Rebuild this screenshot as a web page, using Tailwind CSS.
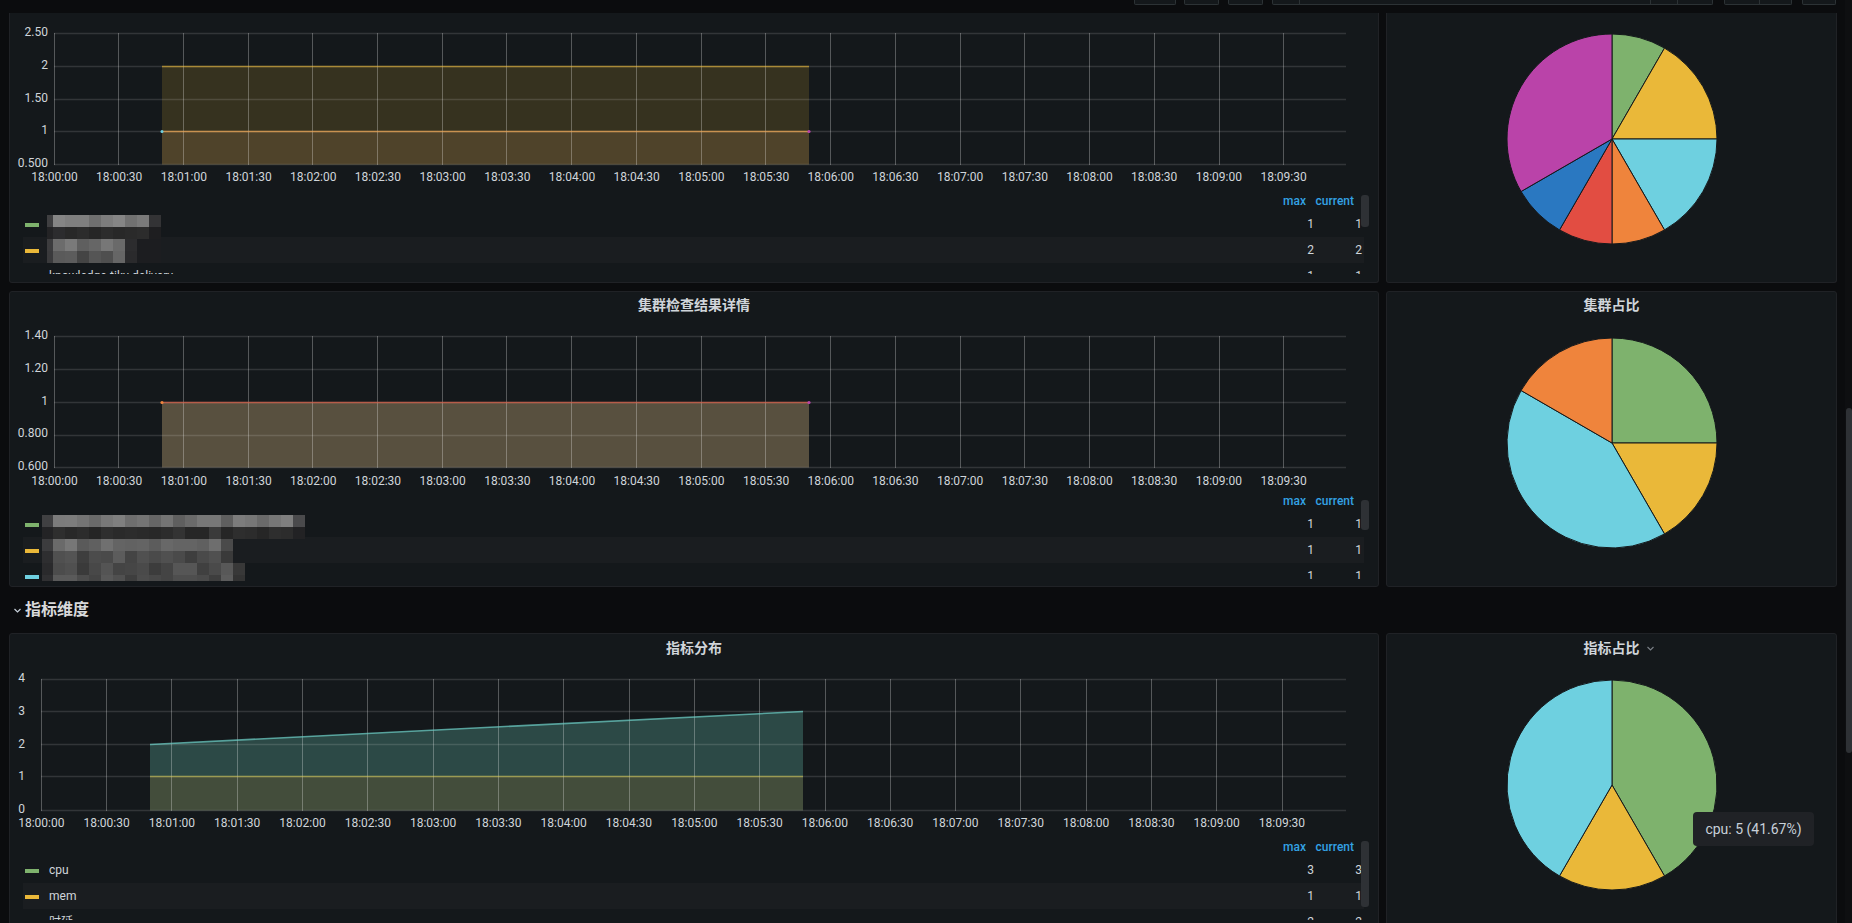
<!DOCTYPE html>
<html lang="zh">
<head>
<meta charset="utf-8">
<title>Dashboard</title>
<script src="https://cdn.jsdelivr.net/npm/@tailwindcss/browser@4"></script>
</head>
<body class="relative h-[923px] w-[1852px] overflow-hidden bg-[#0b0c0e] font-['Roboto','Noto_Sans_CJK_SC',sans-serif] text-xs text-[#d0d5da]">

<!-- toolbar -->
<div class="flex h-[13px] items-start justify-end pr-[16px]">
  <div class="h-[5px] w-[42px] rounded-b-[2px] border border-t-0 border-[#2c3235] bg-[#14181b]"></div>
  <div class="ml-[8px] h-[5px] w-[35px] rounded-b-[2px] border border-t-0 border-[#2c3235] bg-[#14181b]"></div>
  <div class="ml-[9px] h-[5px] w-[35px] rounded-b-[2px] border border-t-0 border-[#2c3235] bg-[#14181b]"></div>
  <div class="ml-[9px] flex h-[5px] w-[441px] rounded-b-[2px] border border-t-0 border-[#2c3235] bg-[#14181b]">
    <div class="w-[27px] border-r border-[#2c3235]"></div>
    <div class="w-[351px] border-r border-[#2c3235]"></div>
    <div class="w-[27px] border-r border-[#2c3235]"></div>
  </div>
  <div class="ml-[11px] flex h-[5px] w-[68px] rounded-b-[2px] border border-t-0 border-[#2c3235] bg-[#14181b]">
    <div class="w-[35px] border-r border-[#2c3235]"></div>
  </div>
  <div class="ml-[10px] h-[5px] w-[34px] rounded-b-[2px] border border-t-0 border-[#2c3235] bg-[#14181b]"></div>
</div>

<!-- dashboard -->
<div class="ml-[9px] w-[1828px]">
  <!-- row 1 -->
  <div class="flex gap-[7px]">
    <section class="relative h-[270px] w-[1370px] rounded-b-[3px] border-x border-b border-[#202226] bg-[#14181b] pt-[20px]">
      <div class="flex items-start">
        <div class="-mb-[6px] -mt-[9px] flex h-[147px] w-[44px] flex-col justify-between pr-[6px] text-right leading-4">
          <span>2.50</span><span>2</span><span>1.50</span><span>1</span><span>0.500</span>
        </div>
        <svg width="1292" height="132" class="block overflow-visible">
          <rect x="108" y="33.5" width="647" height="98" fill="#eab839" fill-opacity="0.16"/>
          <rect x="108" y="98.5" width="647" height="33" fill="#f6ba73" fill-opacity="0.13"/>
          <g stroke="#ffffff">
            <path stroke-opacity="0.28" d="M0.5 0V132M64.5 0V132M129.5 0V132M194.5 0V132M258.5 0V132M323.5 0V132M388.5 0V132M452.5 0V132M517.5 0V132M582.5 0V132M647.5 0V132M711.5 0V132M776.5 0V132M841.5 0V132M906.5 0V132M970.5 0V132M1035.5 0V132M1100.5 0V132M1165.5 0V132M1229.5 0V132"/>
            <path stroke-opacity="0.13" stroke-width="1.6" d="M0 0.5H1292M0 33.5H1292M0 66.5H1292M0 98.5H1292M0 131.5H1292"/>
          </g>
          <path d="M108 33.5H755" stroke="#eab839" stroke-opacity="0.62" stroke-width="1.4"/>
          <path d="M108 98.5H755" stroke="#e8a455" stroke-opacity="0.78" stroke-width="1.6"/>
          <circle cx="108" cy="98.5" r="1.5" fill="#6ed0e0"/>
          <circle cx="755" cy="98.5" r="1.6" fill="#ba43a9"/>
        </svg>
      </div>
      <div class="ml-[12.15px] mt-[4px] flex leading-4">
        <span class="w-[64.7px] shrink-0 text-center">18:00:00</span><span class="w-[64.7px] shrink-0 text-center">18:00:30</span><span class="w-[64.7px] shrink-0 text-center">18:01:00</span><span class="w-[64.7px] shrink-0 text-center">18:01:30</span><span class="w-[64.7px] shrink-0 text-center">18:02:00</span><span class="w-[64.7px] shrink-0 text-center">18:02:30</span><span class="w-[64.7px] shrink-0 text-center">18:03:00</span><span class="w-[64.7px] shrink-0 text-center">18:03:30</span><span class="w-[64.7px] shrink-0 text-center">18:04:00</span><span class="w-[64.7px] shrink-0 text-center">18:04:30</span><span class="w-[64.7px] shrink-0 text-center">18:05:00</span><span class="w-[64.7px] shrink-0 text-center">18:05:30</span><span class="w-[64.7px] shrink-0 text-center">18:06:00</span><span class="w-[64.7px] shrink-0 text-center">18:06:30</span><span class="w-[64.7px] shrink-0 text-center">18:07:00</span><span class="w-[64.7px] shrink-0 text-center">18:07:30</span><span class="w-[64.7px] shrink-0 text-center">18:08:00</span><span class="w-[64.7px] shrink-0 text-center">18:08:30</span><span class="w-[64.7px] shrink-0 text-center">18:09:00</span><span class="w-[64.7px] shrink-0 text-center">18:09:30</span>
      </div>
      <div class="relative ml-[13px] mt-[5px] h-[84px] w-[1341px] overflow-hidden">
        <div class="grid h-[21px] grid-cols-[1fr_48px_48px] items-center pr-[2px] text-right font-medium text-[#33a2e5]"><span></span><span class="pr-2">max</span><span class="pr-2">current</span></div>
        <div class="grid h-[26px] grid-cols-[1fr_48px_48px] items-center pl-[2px] pr-[2px] text-right"><span class="flex items-center gap-[10px] text-left"><i class="mt-[2px] h-[4px] w-[14px] bg-[#7eb26d]"></i><span>&nbsp;</span></span><span>1</span><span>1</span></div>
        <div class="grid h-[26px] grid-cols-[1fr_48px_48px] items-center bg-[#1a1d20] pl-[2px] pr-[2px] text-right"><span class="flex items-center gap-[10px] text-left"><i class="mt-[2px] h-[4px] w-[14px] bg-[#eab839]"></i><span>&nbsp;</span></span><span>2</span><span>2</span></div>
        <div class="grid h-[26px] grid-cols-[1fr_48px_48px] items-center pl-[2px] pr-[2px] text-right"><span class="flex items-center gap-[10px] text-left"><i class="mt-[2px] h-[4px] w-[14px] bg-[#6ed0e0]"></i><span>knowledge-tikv-delivery</span></span><span>1</span><span>1</span></div>
      </div>
      <div class="absolute left-[1351px] top-[182px] h-[32px] w-[8px] rounded-[3px] bg-[#2e3135]"></div>
      <svg width="114" height="48" class="absolute left-[37px] top-[202px]">
        <g shape-rendering="crispEdges">
          <rect x="0" y="0" width="6" height="12" fill="#3f3f41"/><rect x="6" y="0" width="12" height="12" fill="#858585"/><rect x="18" y="0" width="12" height="12" fill="#7f7f7f"/><rect x="30" y="0" width="12" height="12" fill="#7f7f7f"/><rect x="42" y="0" width="12" height="12" fill="#6f6f6f"/><rect x="54" y="0" width="12" height="12" fill="#7d7d7d"/><rect x="66" y="0" width="12" height="12" fill="#858585"/><rect x="78" y="0" width="12" height="12" fill="#717171"/><rect x="90" y="0" width="12" height="12" fill="#7a7a7a"/><rect x="102" y="0" width="12" height="12" fill="#333335"/>
          <rect x="0" y="12" width="6" height="12" fill="#232325"/><rect x="6" y="12" width="12" height="12" fill="#2c2c2e"/><rect x="18" y="12" width="12" height="12" fill="#282828"/><rect x="30" y="12" width="12" height="12" fill="#2c2c2c"/><rect x="42" y="12" width="12" height="12" fill="#262626"/><rect x="54" y="12" width="12" height="12" fill="#2c2c2c"/><rect x="66" y="12" width="12" height="12" fill="#282828"/><rect x="78" y="12" width="12" height="12" fill="#2a2a2a"/><rect x="90" y="12" width="12" height="12" fill="#2c2c2c"/><rect x="102" y="12" width="12" height="12" fill="#1e1e20"/>
          <rect x="0" y="24" width="6" height="12" fill="#3c3c3e"/><rect x="6" y="24" width="12" height="12" fill="#6c6c6c"/><rect x="18" y="24" width="12" height="12" fill="#7a7a7a"/><rect x="30" y="24" width="12" height="12" fill="#5f5f5f"/><rect x="42" y="24" width="12" height="12" fill="#666666"/><rect x="54" y="24" width="12" height="12" fill="#777777"/><rect x="66" y="24" width="12" height="12" fill="#6a6a6a"/><rect x="78" y="24" width="12" height="12" fill="#2c2c2e"/><rect x="90" y="24" width="24" height="12" fill="#1c1d20"/>
          <rect x="0" y="36" width="6" height="12" fill="#3a3a3c"/><rect x="6" y="36" width="12" height="12" fill="#5a5a5a"/><rect x="18" y="36" width="12" height="12" fill="#5c5c5c"/><rect x="30" y="36" width="12" height="12" fill="#444444"/><rect x="42" y="36" width="12" height="12" fill="#555555"/><rect x="54" y="36" width="12" height="12" fill="#4f4f4f"/><rect x="66" y="36" width="12" height="12" fill="#666666"/><rect x="78" y="36" width="12" height="12" fill="#2a2a2c"/><rect x="90" y="36" width="24" height="12" fill="#1c1d20"/>
        </g>
      </svg>
    </section>
    <section class="flex h-[270px] w-[451px] justify-center rounded-b-[3px] border-x border-b border-[#202226] bg-[#14181b] pt-[20px]">
      <svg width="212" height="212" viewBox="-106 -106 212 212" class="block" stroke="#14181b" stroke-width="1">
        <path d="M0 0V-105A105 105 0 0 1 52.5 -90.93Z" fill="#7eb26d"/>
        <path d="M0 0L52.5 -90.93A105 105 0 0 1 105 0Z" fill="#eab839"/>
        <path d="M0 0H105A105 105 0 0 1 52.5 90.93Z" fill="#6ed0e0"/>
        <path d="M0 0L52.5 90.93A105 105 0 0 1 0 105Z" fill="#ef843c"/>
        <path d="M0 0V105A105 105 0 0 1 -52.5 90.93Z" fill="#e24d42"/>
        <path d="M0 0L-52.5 90.93A105 105 0 0 1 -90.93 52.5Z" fill="#2a78c1"/>
        <path d="M0 0L-90.93 52.5A105 105 0 0 1 0 -105Z" fill="#ba43a9"/>
      </svg>
    </section>
  </div>

  <!-- row 2 -->
  <div class="mt-[8px] flex gap-[7px]">
    <section class="relative h-[296px] w-[1370px] rounded-[3px] border border-[#202226] bg-[#14181b]">
      <h3 class="h-[28px] text-center text-[14px] font-bold leading-[27px]">集群检查结果详情</h3>
      <div class="mt-[16px] flex items-start">
        <div class="-mb-[6px] -mt-[9px] flex h-[147px] w-[44px] flex-col justify-between pr-[6px] text-right leading-4">
          <span>1.40</span><span>1.20</span><span>1</span><span>0.800</span><span>0.600</span>
        </div>
        <svg width="1292" height="132" class="block overflow-visible">
          <rect x="108" y="66.5" width="647" height="65" fill="#d6b983" fill-opacity="0.35"/>
          <g stroke="#ffffff">
            <path stroke-opacity="0.28" d="M0.5 0V132M64.5 0V132M129.5 0V132M194.5 0V132M258.5 0V132M323.5 0V132M388.5 0V132M452.5 0V132M517.5 0V132M582.5 0V132M647.5 0V132M711.5 0V132M776.5 0V132M841.5 0V132M906.5 0V132M970.5 0V132M1035.5 0V132M1100.5 0V132M1165.5 0V132M1229.5 0V132"/>
            <path stroke-opacity="0.13" stroke-width="1.6" d="M0 0.5H1292M0 33.5H1292M0 66.5H1292M0 99.5H1292M0 131.5H1292"/>
          </g>
          <path d="M108 66.5H755" stroke="#d0604a" stroke-opacity="0.8" stroke-width="1.6"/>
          <circle cx="108" cy="66.5" r="1.6" fill="#ef843c"/>
          <circle cx="755" cy="66.5" r="1.6" fill="#ba43a9"/>
        </svg>
      </div>
      <div class="ml-[12.15px] mt-[5px] flex leading-4">
        <span class="w-[64.7px] shrink-0 text-center">18:00:00</span><span class="w-[64.7px] shrink-0 text-center">18:00:30</span><span class="w-[64.7px] shrink-0 text-center">18:01:00</span><span class="w-[64.7px] shrink-0 text-center">18:01:30</span><span class="w-[64.7px] shrink-0 text-center">18:02:00</span><span class="w-[64.7px] shrink-0 text-center">18:02:30</span><span class="w-[64.7px] shrink-0 text-center">18:03:00</span><span class="w-[64.7px] shrink-0 text-center">18:03:30</span><span class="w-[64.7px] shrink-0 text-center">18:04:00</span><span class="w-[64.7px] shrink-0 text-center">18:04:30</span><span class="w-[64.7px] shrink-0 text-center">18:05:00</span><span class="w-[64.7px] shrink-0 text-center">18:05:30</span><span class="w-[64.7px] shrink-0 text-center">18:06:00</span><span class="w-[64.7px] shrink-0 text-center">18:06:30</span><span class="w-[64.7px] shrink-0 text-center">18:07:00</span><span class="w-[64.7px] shrink-0 text-center">18:07:30</span><span class="w-[64.7px] shrink-0 text-center">18:08:00</span><span class="w-[64.7px] shrink-0 text-center">18:08:30</span><span class="w-[64.7px] shrink-0 text-center">18:09:00</span><span class="w-[64.7px] shrink-0 text-center">18:09:30</span>
      </div>
      <div class="relative ml-[13px] mt-[1px] h-[89px] w-[1341px] overflow-hidden">
        <div class="grid h-[21px] grid-cols-[1fr_48px_48px] items-center pr-[2px] text-right font-medium text-[#33a2e5]"><span></span><span class="pr-2">max</span><span class="pr-2">current</span></div>
        <div class="grid h-[26px] grid-cols-[1fr_48px_48px] items-center pl-[2px] pr-[2px] text-right"><span class="flex items-center text-left"><i class="mt-[2px] h-[4px] w-[14px] bg-[#7eb26d]"></i></span><span>1</span><span>1</span></div>
        <div class="grid h-[26px] grid-cols-[1fr_48px_48px] items-center bg-[#1a1d20] pl-[2px] pr-[2px] text-right"><span class="flex items-center text-left"><i class="mt-[2px] h-[4px] w-[14px] bg-[#eab839]"></i></span><span>1</span><span>1</span></div>
        <div class="grid h-[26px] grid-cols-[1fr_48px_48px] items-center pl-[2px] pr-[2px] text-right"><span class="flex items-center text-left"><i class="mt-[2px] h-[4px] w-[14px] bg-[#6ed0e0]"></i></span><span>1</span><span>1</span></div>
      </div>
      <div class="absolute left-[1351px] top-[208px] h-[30px] w-[8px] rounded-[3px] bg-[#2e3135]"></div>
      <svg width="263" height="66" class="absolute left-[32px] top-[223px]">
        <g shape-rendering="crispEdges">
          <rect x="0" y="0" width="11" height="12" fill="#404042"/><rect x="11" y="0" width="12" height="12" fill="#7b7b7b"/><rect x="23" y="0" width="12" height="12" fill="#7c7c7c"/><rect x="35" y="0" width="12" height="12" fill="#747474"/><rect x="47" y="0" width="12" height="12" fill="#6a6a6a"/><rect x="59" y="0" width="12" height="12" fill="#787878"/><rect x="71" y="0" width="12" height="12" fill="#7f7f7f"/><rect x="83" y="0" width="12" height="12" fill="#6e6e6e"/><rect x="95" y="0" width="12" height="12" fill="#747474"/><rect x="107" y="0" width="12" height="12" fill="#666666"/><rect x="119" y="0" width="12" height="12" fill="#747474"/><rect x="131" y="0" width="12" height="12" fill="#5f5f5f"/><rect x="143" y="0" width="12" height="12" fill="#6a6a6a"/><rect x="155" y="0" width="12" height="12" fill="#777777"/><rect x="167" y="0" width="12" height="12" fill="#777777"/><rect x="179" y="0" width="12" height="12" fill="#5f5f5f"/><rect x="191" y="0" width="12" height="12" fill="#7c7c7c"/><rect x="203" y="0" width="12" height="12" fill="#777777"/><rect x="215" y="0" width="12" height="12" fill="#6a6a6a"/><rect x="227" y="0" width="12" height="12" fill="#777777"/><rect x="239" y="0" width="12" height="12" fill="#7f7f7f"/><rect x="251" y="0" width="12" height="12" fill="#4a4a4c"/>
          <rect x="0" y="12" width="11" height="12" fill="#232325"/><rect x="11" y="12" width="12" height="12" fill="#2e2e2e"/><rect x="23" y="12" width="12" height="12" fill="#282828"/><rect x="35" y="12" width="12" height="12" fill="#2c2c2c"/><rect x="47" y="12" width="12" height="12" fill="#252525"/><rect x="59" y="12" width="12" height="12" fill="#2e2e2e"/><rect x="71" y="12" width="12" height="12" fill="#2a2a2a"/><rect x="83" y="12" width="12" height="12" fill="#2c2c2c"/><rect x="95" y="12" width="12" height="12" fill="#2a2a2a"/><rect x="107" y="12" width="12" height="12" fill="#282828"/><rect x="119" y="12" width="12" height="12" fill="#2c2c2c"/><rect x="131" y="12" width="12" height="12" fill="#333333"/><rect x="143" y="12" width="12" height="12" fill="#262626"/><rect x="155" y="12" width="12" height="12" fill="#262626"/><rect x="167" y="12" width="12" height="12" fill="#3a3a3a"/><rect x="179" y="12" width="12" height="12" fill="#262626"/><rect x="191" y="12" width="12" height="12" fill="#2e2e2e"/><rect x="203" y="12" width="12" height="12" fill="#2c2c2c"/><rect x="215" y="12" width="12" height="12" fill="#262626"/><rect x="227" y="12" width="12" height="12" fill="#2e2e2e"/><rect x="239" y="12" width="12" height="12" fill="#2c2c2c"/><rect x="251" y="12" width="12" height="12" fill="#222224"/>
          <rect x="0" y="24" width="11" height="12" fill="#3c3c3e"/><rect x="11" y="24" width="12" height="12" fill="#6a6a6a"/><rect x="23" y="24" width="12" height="12" fill="#777777"/><rect x="35" y="24" width="12" height="12" fill="#5a5a5a"/><rect x="47" y="24" width="12" height="12" fill="#606060"/><rect x="59" y="24" width="12" height="12" fill="#707070"/><rect x="71" y="24" width="12" height="12" fill="#646464"/><rect x="83" y="24" width="12" height="12" fill="#626262"/><rect x="95" y="24" width="12" height="12" fill="#646464"/><rect x="107" y="24" width="12" height="12" fill="#5c5c5c"/><rect x="119" y="24" width="12" height="12" fill="#686868"/><rect x="131" y="24" width="12" height="12" fill="#646464"/><rect x="143" y="24" width="12" height="12" fill="#646464"/><rect x="155" y="24" width="12" height="12" fill="#606060"/><rect x="167" y="24" width="12" height="12" fill="#6e6e6e"/><rect x="179" y="24" width="12" height="12" fill="#4a4a4a"/>
          <rect x="0" y="36" width="11" height="12" fill="#2e2e30"/><rect x="11" y="36" width="12" height="12" fill="#505050"/><rect x="23" y="36" width="12" height="12" fill="#545454"/><rect x="35" y="36" width="12" height="12" fill="#3e3e3e"/><rect x="47" y="36" width="12" height="12" fill="#4c4c4c"/><rect x="59" y="36" width="12" height="12" fill="#4a4a4a"/><rect x="71" y="36" width="12" height="12" fill="#5c5c5c"/><rect x="83" y="36" width="12" height="12" fill="#444444"/><rect x="95" y="36" width="12" height="12" fill="#505050"/><rect x="107" y="36" width="12" height="12" fill="#4a4a4a"/><rect x="119" y="36" width="12" height="12" fill="#505050"/><rect x="131" y="36" width="12" height="12" fill="#4a4a4a"/><rect x="143" y="36" width="12" height="12" fill="#3e3e3e"/><rect x="155" y="36" width="12" height="12" fill="#4a4a4a"/><rect x="167" y="36" width="12" height="12" fill="#505050"/><rect x="179" y="36" width="12" height="12" fill="#3a3a3a"/>
          <rect x="0" y="48" width="11" height="12" fill="#2a2a2c"/><rect x="11" y="48" width="12" height="12" fill="#4c4c4c"/><rect x="23" y="48" width="12" height="12" fill="#505050"/><rect x="35" y="48" width="12" height="12" fill="#3a3a3a"/><rect x="47" y="48" width="12" height="12" fill="#484848"/><rect x="59" y="48" width="12" height="12" fill="#545454"/><rect x="71" y="48" width="12" height="12" fill="#444444"/><rect x="83" y="48" width="12" height="12" fill="#464646"/><rect x="95" y="48" width="12" height="12" fill="#4a4a4a"/><rect x="107" y="48" width="12" height="12" fill="#3c3c3c"/><rect x="119" y="48" width="12" height="12" fill="#444444"/><rect x="131" y="48" width="12" height="12" fill="#565656"/><rect x="143" y="48" width="12" height="12" fill="#565656"/><rect x="155" y="48" width="12" height="12" fill="#404040"/><rect x="167" y="48" width="12" height="12" fill="#4a4a4a"/><rect x="179" y="48" width="12" height="12" fill="#585858"/><rect x="191" y="48" width="12" height="12" fill="#383838"/>
          <rect x="0" y="60" width="11" height="6" fill="#303032"/><rect x="11" y="60" width="12" height="6" fill="#5a5a5a"/><rect x="23" y="60" width="12" height="6" fill="#5a5a5a"/><rect x="35" y="60" width="12" height="6" fill="#4c4c4c"/><rect x="47" y="60" width="12" height="6" fill="#444444"/><rect x="59" y="60" width="12" height="6" fill="#585858"/><rect x="71" y="60" width="12" height="6" fill="#505050"/><rect x="83" y="60" width="12" height="6" fill="#3e3e3e"/><rect x="95" y="60" width="12" height="6" fill="#4c4c4c"/><rect x="107" y="60" width="12" height="6" fill="#484848"/><rect x="119" y="60" width="12" height="6" fill="#444444"/><rect x="131" y="60" width="12" height="6" fill="#4e4e4e"/><rect x="143" y="60" width="12" height="6" fill="#4e4e4e"/><rect x="155" y="60" width="12" height="6" fill="#4a4a4a"/><rect x="167" y="60" width="12" height="6" fill="#3e3e3e"/><rect x="179" y="60" width="12" height="6" fill="#5c5c5c"/><rect x="191" y="60" width="12" height="6" fill="#333333"/>
        </g>
      </svg>
    </section>
    <section class="h-[296px] w-[451px] rounded-[3px] border border-[#202226] bg-[#14181b]">
      <h3 class="h-[28px] text-center text-[14px] font-bold leading-[27px]">集群占比</h3>
      <div class="mt-[17px] flex justify-center">
        <svg width="212" height="212" viewBox="-106 -106 212 212" class="block" stroke="#14181b" stroke-width="1">
          <path d="M0 0V-105A105 105 0 0 1 105 0Z" fill="#7eb26d"/>
          <path d="M0 0H105A105 105 0 0 1 52.5 90.93Z" fill="#eab839"/>
          <path d="M0 0L52.5 90.93A105 105 0 0 1 -90.93 -52.5Z" fill="#6ed0e0"/>
          <path d="M0 0L-90.93 -52.5A105 105 0 0 1 0 -105Z" fill="#ef843c"/>
        </svg>
      </div>
    </section>
  </div>

  <!-- section header -->
  <div class="flex h-[46px] items-center gap-[3px] pl-[4px] text-[#d8d9da]">
    <svg width="9" height="9" viewBox="0 0 9 9" class="shrink-0" fill="none" stroke="#c7d0d9" stroke-width="1.2"><path d="M1.5 3L4.5 6L7.5 3"/></svg>
    <h2 class="text-base font-bold">指标维度</h2>
  </div>

  <!-- row 3 -->
  <div class="flex gap-[7px]">
    <section class="relative h-[320px] w-[1370px] rounded-[3px] border border-[#202226] bg-[#14181b]">
      <h3 class="h-[28px] text-center text-[14px] font-bold leading-[28px]">指标分布</h3>
      <div class="mt-[17px] flex items-start">
        <div class="-mb-[6px] -mt-[9px] flex h-[147px] w-[31px] flex-col justify-between pr-[16px] text-right leading-4">
          <span>4</span><span>3</span><span>2</span><span>1</span><span>0</span>
        </div>
        <svg width="1305" height="132" class="block overflow-visible">
          <path d="M109 65.5L762 32.5V131.5H109Z" fill="#67bdac" fill-opacity="0.3"/>
          <rect x="109" y="97.5" width="653" height="34" fill="#c66300" fill-opacity="0.15"/>
          <g stroke="#ffffff">
            <path stroke-opacity="0.28" d="M0.5 0V132M65.5 0V132M130.5 0V132M196.5 0V132M261.5 0V132M326.5 0V132M392.5 0V132M457.5 0V132M522.5 0V132M588.5 0V132M653.5 0V132M718.5 0V132M784.5 0V132M849.5 0V132M914.5 0V132M979.5 0V132M1045.5 0V132M1110.5 0V132M1175.5 0V132M1241.5 0V132"/>
            <path stroke-opacity="0.13" stroke-width="1.6" d="M0 0.5H1305M0 32.5H1305M0 65.5H1305M0 97.5H1305M0 131.5H1305"/>
          </g>
          <path d="M109 65.5L762 32.5" stroke="#6ed0c8" stroke-opacity="0.72" stroke-width="1.6" fill="none"/>
          <path d="M109 97.5H762" stroke="#d8cc50" stroke-opacity="0.55" stroke-width="1.6"/>
        </svg>
      </div>
      <div class="-ml-[1.35px] mt-[4px] flex leading-4">
        <span class="w-[65.3px] shrink-0 text-center">18:00:00</span><span class="w-[65.3px] shrink-0 text-center">18:00:30</span><span class="w-[65.3px] shrink-0 text-center">18:01:00</span><span class="w-[65.3px] shrink-0 text-center">18:01:30</span><span class="w-[65.3px] shrink-0 text-center">18:02:00</span><span class="w-[65.3px] shrink-0 text-center">18:02:30</span><span class="w-[65.3px] shrink-0 text-center">18:03:00</span><span class="w-[65.3px] shrink-0 text-center">18:03:30</span><span class="w-[65.3px] shrink-0 text-center">18:04:00</span><span class="w-[65.3px] shrink-0 text-center">18:04:30</span><span class="w-[65.3px] shrink-0 text-center">18:05:00</span><span class="w-[65.3px] shrink-0 text-center">18:05:30</span><span class="w-[65.3px] shrink-0 text-center">18:06:00</span><span class="w-[65.3px] shrink-0 text-center">18:06:30</span><span class="w-[65.3px] shrink-0 text-center">18:07:00</span><span class="w-[65.3px] shrink-0 text-center">18:07:30</span><span class="w-[65.3px] shrink-0 text-center">18:08:00</span><span class="w-[65.3px] shrink-0 text-center">18:08:30</span><span class="w-[65.3px] shrink-0 text-center">18:09:00</span><span class="w-[65.3px] shrink-0 text-center">18:09:30</span>
      </div>
      <div class="relative ml-[13px] mt-[5px] h-[84px] w-[1341px] overflow-hidden">
        <div class="grid h-[21px] grid-cols-[1fr_48px_48px] items-center pr-[2px] text-right font-medium text-[#33a2e5]"><span></span><span class="pr-2">max</span><span class="pr-2">current</span></div>
        <div class="grid h-[26px] grid-cols-[1fr_48px_48px] items-center pl-[2px] pr-[2px] text-right"><span class="flex items-center gap-[10px] text-left"><i class="mt-[2px] h-[4px] w-[14px] bg-[#7eb26d]"></i><span>cpu</span></span><span>3</span><span>3</span></div>
        <div class="grid h-[26px] grid-cols-[1fr_48px_48px] items-center bg-[#1a1d20] pl-[2px] pr-[2px] text-right"><span class="flex items-center gap-[10px] text-left"><i class="mt-[2px] h-[4px] w-[14px] bg-[#eab839]"></i><span>mem</span></span><span>1</span><span>1</span></div>
        <div class="grid h-[26px] grid-cols-[1fr_48px_48px] items-center pl-[2px] pr-[2px] text-right"><span class="flex items-center gap-[10px] text-left"><i class="mt-[2px] h-[4px] w-[14px] bg-[#6ed0e0]"></i><span>时延</span></span><span>2</span><span>2</span></div>
      </div>
      <div class="absolute left-[1351px] top-[207px] h-[66px] w-[8px] rounded-[3px] bg-[#2e3135]"></div>
    </section>
    <section class="h-[320px] w-[451px] rounded-[3px] border border-[#202226] bg-[#14181b]">
      <h3 class="flex h-[28px] items-center justify-center gap-[6px] pl-[15px] text-[14px] font-bold leading-[28px]">
        <span>指标占比</span>
        <svg width="9" height="9" viewBox="0 0 9 9" class="shrink-0" fill="none" stroke="#7b8087" stroke-width="1.1"><path d="M1.5 3L4.5 6L7.5 3"/></svg>
      </h3>
      <div class="mt-[17px] flex justify-center">
        <svg width="212" height="212" viewBox="-106 -106 212 212" class="block" stroke="#14181b" stroke-width="1">
          <path d="M0 0V-105A105 105 0 0 1 52.5 90.93Z" fill="#7eb26d"/>
          <path d="M0 0L52.5 90.93A105 105 0 0 1 -52.5 90.93Z" fill="#eab839"/>
          <path d="M0 0L-52.5 90.93A105 105 0 0 1 0 -105Z" fill="#6ed0e0"/>
        </svg>
      </div>
    </section>
  </div>
</div>

<!-- page scrollbar -->
<div class="absolute inset-y-0 right-0 w-[7px] bg-[#0e0f11]">
  <div class="ml-px mt-[408px] h-[345px] w-[6px] rounded-[3px] bg-[#2e3135]"></div>
</div>

<!-- tooltip -->
<div class="absolute left-[1693px] top-[812px] flex h-[34px] w-[121px] items-center justify-center rounded-[4px] bg-[#202226] text-sm text-[#c7d0d9]">cpu: 5 (41.67%)</div>
</body>
</html>
